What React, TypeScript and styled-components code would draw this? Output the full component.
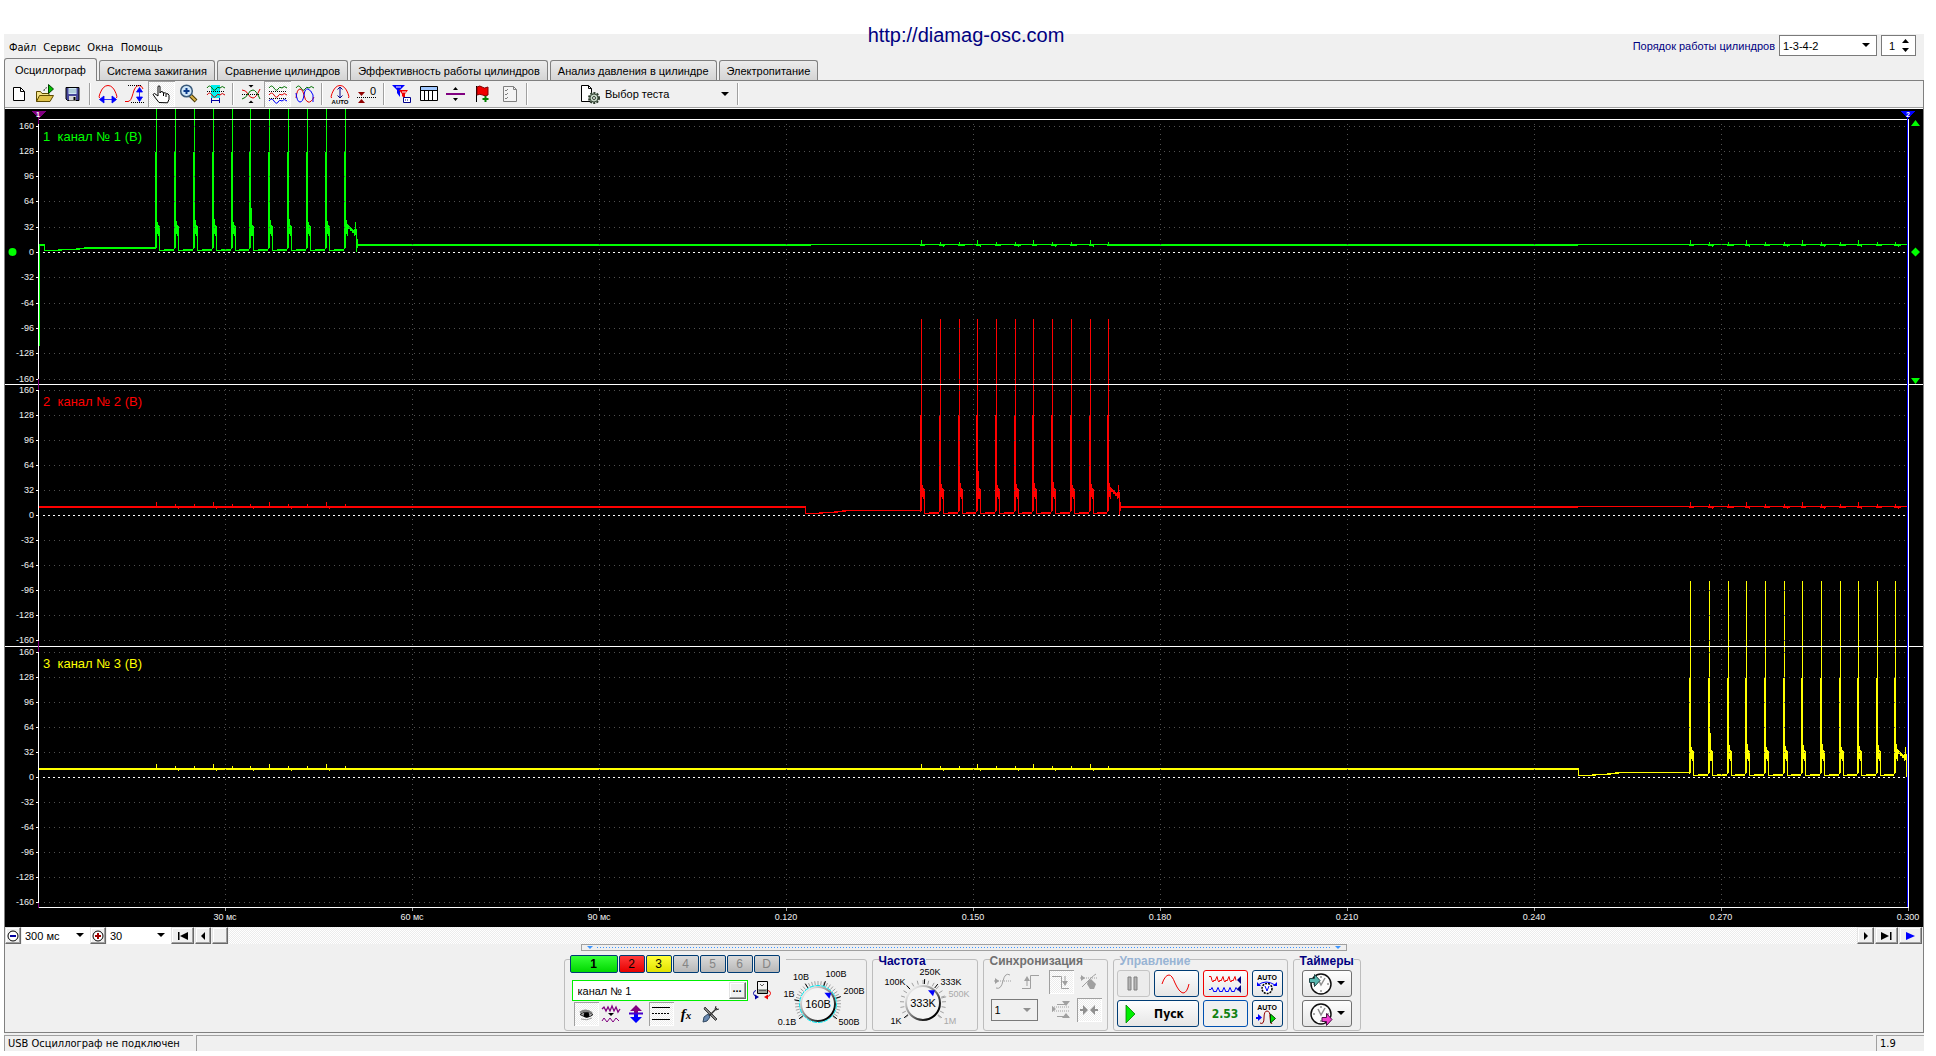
import React, { useLayoutEffect, useRef, useState } from "react";
import styled, { createGlobalStyle, css } from "styled-components";

const GlobalStyle = createGlobalStyle`
  *, *::before, *::after { box-sizing: border-box; }
  body { margin: 0; background: #fff; color: #000; font: 11px/14px "Liberation Sans", Arial, sans-serif; }
  button, select, input { font: inherit; color: inherit; margin: 0; padding: 0; border: 0; background: none; border-radius: 0; }
  fieldset { margin: 0; min-width: 0; }
  svg { display: block; flex: none; }
`;

const ui = `"DejaVu Sans Condensed", "DejaVu Sans", sans-serif`;
const checker = css`
  background: repeating-conic-gradient(#ececec 0 25%, #fff 0 50%) 0 0 / 2px 2px;
`;
const raised = css`
  background: #f0f0f0;
  border: 1px solid;
  border-color: #e3e3e3 #696969 #696969 #e3e3e3;
  box-shadow: inset -1px -1px #a0a0a0, inset 1px 1px #fff;
`;

/* ---------- window ---------- */

const Page = styled.div`position: relative; padding: 34px 12px 0 4px;`;
const SiteLink = styled.a`
  position: absolute; top: 23px; left: 0; right: 4px; margin: auto; width: max-content; z-index: 1;
  font-size: 20px; line-height: 24px; color: #000080; text-decoration: none;
`;
const Frame = styled.main`background: #f0f0f0;`;
const Header = styled.header`display: flex; justify-content: space-between; height: 46px;`;
const HeaderLeft = styled.div`display: flex; flex-direction: column; justify-content: space-between;`;
const MenuBar = styled.nav`display: flex; gap: 7px; padding: 7px 5px 0; font-family: ${ui};`;
const MenuItem = styled.button`line-height: 14px;`;
const TabList = styled.div`display: flex; align-items: flex-end; gap: 2px;`;
const Tab = styled.button<{ $active?: boolean }>`
  height: ${p => (p.$active ? 23 : 20)}px;
  margin-bottom: ${p => (p.$active ? -1 : 0)}px;
  padding: 0 ${p => (p.$active ? 10 : 7)}px;
  border: 1px solid #808080; border-bottom: 0; border-radius: 3px 3px 0 0;
  background: ${p => (p.$active ? "#f0f0f0" : "linear-gradient(#ececec, #d4d4d4)")};
  white-space: nowrap;
`;
const OrderBox = styled.div`display: flex; gap: 4px; padding: 1px 8px 0 0; height: 22px; align-items: stretch;`;
const OrderLabel = styled.label`color: #000080; align-self: center;`;
const Combo = styled.span<{ $w: number; $border?: boolean; $color?: string }>`
  display: grid; align-items: center; width: ${p => p.$w}px; background: ${p => p.$color ?? "#fff"};
  border: ${p => (p.$border ? "1px solid #7a7a7a" : "0")};
  > * { grid-area: 1 / 1; }
  > svg { justify-self: end; margin-right: 6px; pointer-events: none; }
`;
const ComboSelect = styled.select`appearance: none; width: 100%; height: 100%; padding-left: 3px; outline: 0;`;
const Spin = styled.span`
  display: grid; align-items: center; width: 35px; background: #fff; border: 1px solid #7a7a7a;
  > * { grid-area: 1 / 1; }
  > svg { justify-self: end; margin-right: 6px; }
`;
const SpinInput = styled.input`width: 100%; padding-left: 7px; outline: 0;`;

const Body = styled.section`border: 1px solid #808080;`;
const ToolBar = styled.div`
  display: flex; align-items: stretch; height: 28px; padding-bottom: 1px;
  border-bottom: 1px solid #fff; box-shadow: inset 0 -1px #a0a0a0;
`;
const Tool = styled.button<{ $on?: boolean }>`
  display: grid; place-items: center; width: 27px;
  ${p => p.$on && css`${checker} box-shadow: inset 1px 1px #a0a0a0, inset -1px -1px #fff;`}
`;
const Sep = styled.span`
  width: 8px; display: flex; justify-content: center; padding: 2px 0;
  &::before { content: ""; width: 2px; background: #a0a0a0; border-right: 1px solid #fff; }
`;
const TestButton = styled.button`
  display: flex; align-items: center; gap: 4px; width: 154px; margin-left: 49px; padding-right: 5px;
  > span { flex: 1; text-align: left; }
`;

/* ---------- scroll strip ---------- */

const ScrollStrip = styled.div`display: flex; height: 17px;`;
const Track = styled.div`flex: 1; ${checker}`;
const Raised = styled.button<{ $w: number }>`
  ${raised} width: ${p => p.$w}px; display: grid; place-items: center; margin-right: 1px;
`;

/* ---------- control deck ---------- */

const Deck = styled.div`display: flex; flex-direction: column; align-items: center; padding-bottom: 1px;`;
const Splitter = styled.div`
  width: 766px; height: 7px; border: 1px solid #a0a0a0; background: #f0f0f0;
  display: flex; align-items: center; gap: 4px; padding: 0 5px;
  &::before, &::after { content: ""; border: 3px solid transparent; border-top: 3px solid #3a94ff; border-bottom: 0; }
`;
const SplitDots = styled.span`
  flex: 1; height: 1px; background: repeating-linear-gradient(90deg, #3a94ff 0 1px, transparent 1px 3px);
`;
const Groups = styled.div`display: flex; align-items: flex-end; gap: 5px; padding-right: 4px;`;
const groupBox = css`border: 1px solid #bdbdbd; border-radius: 3px;`;
const ChannelGroup = styled.div`${groupBox} display: flex; width: 303px; height: 72px; margin-top: 8px;`;
const ChannelLeft = styled.div`display: flex; flex-direction: column; width: 207px; padding-left: 5px; margin-top: -5px;`;
const ChannelTabs = styled.div`display: flex; gap: 1px; background: #f0f0f0; width: 216px; padding-right: 5px;`;
const fills: Record<string, string> = {
  green: "linear-gradient(#37ff37, #00d800)",
  red: "linear-gradient(#ff3a3a, #e60000)",
  yellow: "linear-gradient(#ffff3a, #e2e200)",
  gray: "linear-gradient(#dadada, #b8b8b8)",
};
const ChannelTab = styled.button<{ $fill: string; $wide?: boolean }>`
  width: ${p => (p.$wide ? 48 : 26)}px; height: 18px; border: 1px solid #003c74; border-radius: 2px;
  background: ${p => fills[p.$fill]};
  font-size: 12px; font-weight: ${p => (p.$wide ? 700 : 400)};
  color: ${p => (p.$fill === "gray" ? "#858585" : "#000")};
`;
const NameRow = styled.div`display: flex; align-items: center; gap: 4px; padding: 7px 0 0 2px;`;
const NameField = styled.span`
  display: flex; align-items: center; width: 177px; height: 21px; background: #fff; border: 1px solid #00f000; padding: 1px;
`;
const NameInput = styled.input`flex: 1; min-width: 0; padding-left: 4px; outline: 0;`;
const MoreButton = styled.button`
  ${raised} width: 17px; height: 17px; padding-bottom: 6px; line-height: 8px; font-weight: 700;
`;
const ModeRow = styled.div`display: flex; padding: 1px 0 0 4px;`;
const Mode = styled.button<{ $on?: boolean }>`
  display: grid; place-items: center; width: 25px; height: 24px;
  ${p => p.$on && css`${checker} box-shadow: inset 1px 1px #a0a0a0, inset -1px -1px #fff;`}
`;
const FxMark = styled.span`font: italic 700 15px/18px "Liberation Serif", serif; > small { font-size: 11px; }`;
const Group = styled.fieldset<{ $w: number }>`
  ${groupBox} width: ${p => p.$w}px; height: 80px; padding: 3px 3px 0;
`;
const Legend = styled.legend<{ $color: string }>`
  margin-left: 3px; padding: 4px 0 0; font-size: 12px; line-height: 12px; font-weight: 700; color: ${p => p.$color};
`;
const DialBox = styled.label`position: relative; display: block; > svg { overflow: visible; }`;
const DialInput = styled.input`position: absolute; inset: 0; width: 100%; height: 100%; opacity: 0; cursor: pointer;`;
const DialSlot = styled.div`padding: 5px 0 0;`;
const FreqSlot = styled.div`margin-top: -6px;`;
const SyncGrid = styled.div`display: grid; grid-template-columns: 29px 29px 28px 25px; row-gap: 4px; padding-left: 4px;`;
const SyncCombo = styled.div`grid-column: span 2; display: flex; align-items: center; > span { height: 22px; }`;
const RunGrid = styled.div`display: grid; grid-template-columns: 33px 45px 45px 31px; gap: 3px 4px; grid-auto-rows: 27px;`;
const Push = styled.button<{ $edge?: string; $span?: boolean }>`
  display: flex; align-items: center; justify-content: center; gap: 4px; min-width: 0;
  padding: 0 ${p => (p.$span ? 6 : 0)}px;
  grid-column: ${p => (p.$span ? "span 2" : "auto")};
  border: 1px solid ${p => p.$edge ?? "#003c74"}; border-radius: 3px;
  background: linear-gradient(#fdfdfd, #e6e6e6);
  font: 700 12px/14px "DejaVu Sans Condensed", sans-serif;
  &:disabled { background: #ececec; }
`;
const StartLabel = styled.span`flex: 1; padding-left: 6px; text-align: center;`;
const Reading = styled.output`
  display: grid; place-items: center; border: 1px solid #0050b0; border-radius: 3px; color: #108010;
  font: 700 12px/14px "DejaVu Sans Condensed", sans-serif;
`;
const TimerColumn = styled.div`
  display: grid; grid-auto-rows: 27px; row-gap: 3px; padding: 0 5px;
`;

const StatusBar = styled.footer`display: flex; gap: 3px; padding-top: 2px; font-family: ${ui};`;
const StatusCell = styled.span<{ $w?: number }>`
  ${p => (p.$w ? `width: ${p.$w}px;` : "flex: 1;")}
  height: 16px; padding: 1px 3px; line-height: 14px; border-top: 1px solid #a0a0a0; border-left: 1px solid #a0a0a0;
`;

/* ---------- icons ---------- */

const Svg = ({ w = 20, h = 20, children }: { w?: number; h?: number; children: React.ReactNode }) => (
  <svg width={w} height={h} viewBox={`0 0 ${w} ${h}`} fill="none" aria-hidden="true">{children}</svg>
);
const Down = ({ c = "#000" }: { c?: string }) => <Svg w={8} h={5}><path d="M0 0h8L4 4z" fill={c} /></Svg>;
const UpDown = () => <Svg w={7} h={14}><path d="M0 4h7L3.500 0zM0 9h7L3.500 13z" fill="#000" /></Svg>;
const wave = (y: number) => `M1 ${y}q2.500-4 5 0t4 1t4-1q2-3 5 0`;

const icons = {
  fresh: <Svg><path d="M4.500 3.500h7l4 4v9h-11z" fill="#fff" stroke="#000" /><path d="M11.500 3.500v4h4" stroke="#000" /></Svg>,
  open: <Svg>
    <path d="M.5 17.500v-10h4l1.500 2h7v3" fill="#f5e48a" stroke="#5c4a00" />
    <path d="M.5 17.500l3-6h14l-3.500 6z" fill="#dfc24a" stroke="#5c4a00" />
    <path d="M8 7q0-3.500 5-3.500" stroke="#444" strokeDasharray="2 1" />
    <path d="M12.500.5v9l5-4.500z" fill="#00c000" stroke="#004000" />
  </Svg>,
  save: <Svg>
    <path d="M3 3.500h13v13H4.500L3 15z" fill="#46469a" stroke="#000" />
    <path d="M5.500 4h8v6h-8z" fill="#cfe8f4" /><path d="M6 6h7M6 8h7" stroke="#8fb0c0" />
    <path d="M6 12h7v4.500H6z" fill="#d8d8d8" /><path d="M10.500 13h2v3h-2z" fill="#000" />
  </Svg>,
  period: <Svg>
    <path d="M1.500 14q-1-1 .5-4.500Q5 1.500 10 1.500t8 8q1.500 3.500.5 4.500" stroke="#f00000" />
    <path d="M5 15.500h10M1.500 15.500l4.500-3.500v7zM18.500 15.500L14 12v7z" fill="#00f" stroke="#00f" strokeWidth=".8" />
  </Svg>,
  ampl: <Svg>
    <path d="M0 17.500h3q3 0 5-8t6-8q3 0 4 3.500" stroke="#f00000" />
    <path d="M3 1.500h14M6 18.500h13" stroke="#000" strokeDasharray="1 1" />
    <path d="M14.500 6v9M14.500 3.500L11.500 8h6zM14.500 17.500l-3-4.500h6z" fill="#00f" stroke="#00f" strokeWidth=".8" />
  </Svg>,
  hand: <Svg>
    <path d="M7 18.500L3.500 14 1 10.500l1.500-1L6 12V3q0-1.200 1-1.200T8 3v6l1-1.500 2 .5.500 1 2-.2.700 1 1.800 0 1 1.500v4l-1.500 3.500z" fill="#fff" stroke="#000" />
    <path d="M11.500 9v3M14 10v3" stroke="#000" />
  </Svg>,
  zoom: <Svg>
    <path d="M11 11l6 6" stroke="#4a3a00" strokeWidth="4" /><path d="M11.500 11.500l5 5" stroke="#d8b048" strokeWidth="2" />
    <circle cx="7.500" cy="7" r="5.800" fill="#cfe6f8" stroke="#3a5a7a" strokeWidth="1.500" />
    <path d="M7.500 4v6M4.500 7h6" stroke="#0a3a8a" strokeWidth="2" />
  </Svg>,
  range: <Svg>
    <path d="M5 1h9v13H5z" fill="#00f0f0" /><path d={wave(4)} stroke="#007000" /><path d={wave(11)} stroke="#d00000" />
    <path d="M1 7.500h18" stroke="#000" strokeDasharray="1 1" />
    <path d="M5.500 14v5M13.500 14v5M6 16.500h7" stroke="#0000a0" />
  </Svg>,
  center: <Svg>
    <path d="M1 6q4 0 6 4t5 4 7-9" stroke="#e00000" /><path d="M1 15q4-1 6-5t5-4 7 9" stroke="#007000" />
    <path d="M1 10.500h18" stroke="#000" strokeDasharray="1 1" />
    <path d="M7.500 1h5L10 3.500zM7.500 19h5L10 16.500z" fill="#000" />
  </Svg>,
  stack: <Svg>
    <path d={wave(4)} stroke="#007000" /><path d={wave(11)} stroke="#e00000" /><path d={wave(17)} stroke="#00f" />
    <path d="M1 7.500h18M1 14.500h18" stroke="#000" strokeDasharray="1 1" />
  </Svg>,
  merge: <Svg>
    <path d={wave(4)} stroke="#007000" />
    <path d="M1 14q1-9 4-9t4 6 4 7 6-5" stroke="#e00000" /><path d="M1 9q1 9 4 9t4-7 4-6 5 6v7" stroke="#00f" />
  </Svg>,
  auto: <Svg>
    <path d="M1.500 14q-1-1 .5-4.500Q5 1.500 10 1.500t8 8q1.500 3.500.5 4.500" stroke="#f00000" />
    <path d="M10 4v9M7.500 5.500L10 3l2.500 2.500M7.500 11.500L10 14l2.500-2.500" stroke="#00008b" />
    <text x="10" y="20" textAnchor="middle" fontSize="6" fontWeight="700" fontFamily="Liberation Sans" fill="#000">AUTO</text>
  </Svg>,
  zero: <Svg>
    <path d="M1 8h7L4.500 12zM1 19h7l-3.500-4z" fill="#900000" /><path d="M0 13.500h19" stroke="#000" strokeDasharray="1 1" />
    <text x="13" y="11" fontSize="11" fontFamily="Liberation Sans" fill="#000">0</text>
  </Svg>,
  filter: <Svg>
    <path d="M0 1h13L8 6v7L5 9V6z" fill="#00f" /><path d="M7 6h9l-3 4v5l-3-3v-2z" fill="#f00000" />
    <path d="M4 3h5M10 8h4" stroke="#fff" /><path d="M11.500 13.500h7v5h-7z" fill="#fff" stroke="#00008b" /><path d="M13 16h4" stroke="#00008b" strokeDasharray="1 1" />
  </Svg>,
  table: <Svg><path d="M1.500 2.500h17v14h-17z" fill="#fff" stroke="#000" /><path d="M2 3h16v3H2z" fill="#a0c8ff" /><path d="M2 6.500h16M5.500 6v10M9.500 6v10M13.500 6v10" stroke="#000" /></Svg>,
  split: <Svg><path d="M0 10h19" stroke="#800080" strokeWidth="2" /><path d="M7 6h5L9.500 3zM7 14h5l-2.500 3z" fill="#000" /></Svg>,
  flag: <Svg><path d="M3.500 2v16" stroke="#000" /><path d="M4 3q3-2 5 0t6 0v8q-3 1.500-5.500 0T4 11z" fill="#f00000" stroke="#800000" /><path d="M12.500 12v6M9.500 15h6" stroke="#008000" strokeWidth="2" /></Svg>,
  list: <Svg><path d="M3.500 2.500h10l3 3v12h-13z" fill="#f4f4f4" stroke="#808080" /><path d="M13.500 2.500v3h3M5 6l1 1 2-2M5 10l1 1 2-2M5 14l1 1 2-2" stroke="#808080" /></Svg>,
  test: <Svg w={21}>
    <path d="M1.500 1.500h7l3 3v13h-10z" fill="#fff" stroke="#000" /><path d="M8.500 1.500v3h3" stroke="#000" />
    <circle cx="14" cy="14" r="5" fill="#b8c8b8" stroke="#2c3c2c" strokeWidth="2" strokeDasharray="2 1.200" />
    <circle cx="14" cy="14" r="4" fill="#c8d8c8" stroke="#405040" /><circle cx="14" cy="14" r="1.500" fill="#fff" stroke="#304030" />
  </Svg>,
  minus: <Svg w={12} h={12}><circle cx="6" cy="6" r="5" fill="#fff" stroke="#000" /><path d="M3 6h6" stroke="#0000a0" strokeWidth="2" /></Svg>,
  plus: <Svg w={12} h={12}><circle cx="6" cy="6" r="5" fill="#fff" stroke="#000" /><path d="M3 6h6M6 3v6" stroke="#a00000" strokeWidth="2" /></Svg>,
  first: <Svg w={12} h={8}><path d="M1 0h1.500v8H1zM11 0v8L3 4z" fill="#000" /></Svg>,
  prev: <Svg w={5} h={8}><path d="M4 0v8L0 4z" fill="#000" /></Svg>,
  next: <Svg w={5} h={8}><path d="M1 0v8l4-4z" fill="#000" /></Svg>,
  last: <Svg w={12} h={8}><path d="M9 0h1.500v8H9zM0 0v8l8-4z" fill="#000" /></Svg>,
  play: <Svg w={9} h={8}><path d="M0 0v8l9-4z" fill="#00f" /></Svg>,
  device: <Svg h={19}>
    <path d="M5.500.5h10v12h-10z" fill="#f4f4f4" stroke="#000" /><path d="M6 8h9v4H6z" fill="#a0a8a0" /><path d="M8 3l2 2 2-2M7 9.500h7" stroke="#606060" />
    <path d="M4 9.500q-2.500.5-2.500 3t4 3.500" stroke="#0000a0" /><path d="M3 13.500v5l4-2.500z" fill="#0000a0" />
    <path d="M16 9.500q2.500.5 2.500 3t-4 3.500" stroke="#f00000" /><path d="M16 13.500v5l-4-2.500z" fill="#f00000" />
  </Svg>,
  eye: <Svg><path d="M4 10.500q6-5 13 0-5 5-13 0z" fill="#b0b0b0" stroke="#202020" /><path d="M4 8.500q6-4 12 .5" stroke="#808080" strokeWidth="2" /><circle cx="10.500" cy="11" r="2.800" fill="#000" /><path d="M5 15q6 2 11-1" stroke="#a0a0a0" /></Svg>,
  smooth: <Svg><path d="M1 5l2-2 2 4 2-4 2 4 2-5 2 5 2-4 2 5 2-3" stroke="#800080" strokeWidth="1.300" /><path d="M7 9h6l-3 3z" fill="#000" /><path d="M1 17l2-3 3 4 3-4 3 4 3-4 3 3" stroke="#800080" /></Svg>,
  shift: <Svg><path d="M10 1l6 6h-4v3H8V7H4z" fill="#800080" /><path d="M10 19l6-6h-4v-3H8v3H4z" fill="#00f" /><path d="M3 9.500h14" stroke="#40c" strokeWidth="2" /></Svg>,
  lines: <Svg><path d="M1 3.500h18M1 15.500h18" stroke="#000" /><path d="M1 9.500h18" stroke="#000" strokeDasharray="2 1" /></Svg>,
  tools: <Svg><path d="M4 3l12 12-1.500 1.500L3 5z" fill="#808080" stroke="#202020" strokeWidth=".8" /><path d="M16 4l-8 8" stroke="#303030" strokeWidth="1.500" /><path d="M3 13l4-3 2 3-3 4-4 1z" fill="#6888b0" stroke="#304860" /><path d="M14 5l1-3M15 6l3-1" stroke="#303030" /></Svg>,
  rise: <Svg><path d="M1 9h17" stroke="#a0a0a0" strokeDasharray="1 1" /><path d="M2 6v6l4-3z" fill="#a0a0a0" /><path d="M3 16q5 2 7-7t7-6" stroke="#a0a0a0" /></Svg>,
  edgeUp: <Svg><path d="M0 16.500h8.500v-13H17" stroke="#a0a0a0" /><path d="M5 14V7" stroke="#a0a0a0" /><path d="M2 9l3-5 3 5z" fill="#a0a0a0" /></Svg>,
  edgeDown: <Svg><path d="M1 4.500h9.500v12H18" stroke="#a0a0a0" /><path d="M14 4v8" stroke="#a0a0a0" /><path d="M11 9h6l-3 5z" fill="#a0a0a0" /></Svg>,
  manual: <Svg><path d="M1 6h17" stroke="#a0a0a0" strokeDasharray="1 1" /><path d="M2 3v6l4-3zM9 9l3-2 5 5-2 5h-4l-3-5z" fill="#a0a0a0" /><path d="M3 15q4-4 8-8t6-5" stroke="#a0a0a0" /></Svg>,
  levels: <Svg><path d="M1 7h17M1 11h17" stroke="#a0a0a0" strokeDasharray="1 1" /><path d="M1 6v6l4-3zM11 1h8l-4 5zM11 18h8l-4-5z" fill="#a0a0a0" /><path d="M6 16.500h12M6 4.500h8" stroke="#a0a0a0" /></Svg>,
  meet: <Svg><path d="M1 10h5M14 10h5" stroke="#909090" strokeWidth="2" /><path d="M4 5l5 5-5 5zM16 5l-5 5 5 5z" fill="#909090" /></Svg>,
  pause: <Svg w={14} h={16}><path d="M2 1h3v13H2zM8 1h3v13H8z" fill="#b4b4b4" stroke="#808080" /></Svg>,
  sine: <Svg w={30}><path d="M1 10Q4 1 8 1q3 0 6 8 4 9 8 10 4 0 6-9" stroke="#f00000" /></Svg>,
  pair: <Svg w={33}>
    <path d="M0 2.500h2l1 4 1 1.500 1-2 1 1 2-4.500l1 4 1 1.500 1-2 1 1 2-4.500l1 4 1 1.500 1-2 1 1 2-4.500l1 4 1 1.500 1-2 1 1 2-4.500l1 4" stroke="#f00000" />
    <path d="M0 15.500h2l1-2 2 4.500 1-1 1 1 2-4.500 2 4.500 1-1 1 1 2-4.500 2 4.500 1-1 1 1 2-4.500 2 4.500 1-1 1 1 2-4.500 2 3" stroke="#00f" />
    <path d="M32 2v8l-4-4zM32 11v8l-4-4z" fill="#000080" />
  </Svg>,
  autoKnob: <Svg w={22} h={22}>
    <text x="11" y="7" textAnchor="middle" fontSize="7" fontWeight="700" fontFamily="Liberation Sans" fill="#000">AUTO</text>
    <path d="M2 12q8-6 17 0" stroke="#00f" /><path d="M1 9v4h4zM21 9v4h-4z" fill="#00f" />
    <circle cx="11" cy="15.500" r="5" fill="#fff" stroke="#000" strokeWidth="1.500" strokeDasharray="2 1" /><path d="M9 13l2 5 2-5" stroke="#00f" />
  </Svg>,
  autoRun: <Svg w={22} h={22}>
    <text x="11" y="7" textAnchor="middle" fontSize="7" fontWeight="700" fontFamily="Liberation Sans" fill="#000">AUTO</text>
    <path d="M4 20q4 2 4-5t3-7 3 6 2 7" stroke="#900000" /><path d="M0 15h4" stroke="#00f" strokeWidth="2" /><path d="M2 11v7l4-3.500z" fill="#00f" /><path d="M14.500 11v9l5-4.500z" fill="#00e000" stroke="#004000" />
  </Svg>,
  start: <Svg w={13} h={20}><path d="M2 1v18l9-9z" fill="#00f000" stroke="#008000" strokeWidth=".8" /></Svg>,
};

const Clock = ({ arrow }: { arrow: "in" | "out" }) => (
  <Svg w={24} h={24}>
    <circle cx="12" cy="12" r="10" fill="#fdfdfd" stroke="#101010" strokeWidth="1.500" />
    <path d="M12 4v2M12 18v2M4 12h2M18 12h2M9 7l3 6 4-7" stroke="#909090" strokeWidth="1.500" />
    {arrow === "in"
      ? <path d="M.5 6.500h5v-4l5.500 6-5.500 6v-4h-5z" fill="#58b8b0" stroke="#204848" />
      : <path d="M13 15.500h4.500v-4l5.500 6-5.500 6v-4H13z" fill="#f040d0" stroke="#501048" />}
  </Svg>
);

/* ---------- dials ---------- */

type Mark = { a: number; text: string; x: number; y: number; off?: boolean };
type DialProps = { w: number; cx: number; cy: number; value: string; ring?: string; marks: Mark[]; name: string; ticks: number; pointer: number };

const Dial = ({ w, cx, cy, value, ring, marks, name, ticks, pointer }: DialProps) => {
  const ray = (a: number, r: number): [number, number] => {
    const t = (a * Math.PI) / 180;
    return [cx + r * Math.sin(t), cy - r * Math.cos(t)];
  };
  const seg = (a: number, r1: number, r2: number) => `M${ray(a, r1).join(" ")}L${ray(a, r2).join(" ")}`;
  const id = `rim-${ticks}`;
  const [px, py] = ray(pointer, 14);
  return (
    <DialBox>
      <svg width={w} height={64} viewBox={`0 0 ${w} 64`} fill="none">
        <defs>
          <linearGradient id={id} x1="0" y1="0" x2="1" y2="1">
            <stop offset=".1" stopColor="#f4f4f4" /><stop offset=".5" stopColor="#808080" /><stop offset=".85" stopColor="#000" />
          </linearGradient>
        </defs>
        {Array.from({ length: ticks }, (_, i) => (
          <path key={i} d={seg(-130 + (260 / (ticks - 1)) * i, 19, 23)} stroke="#a0a0a0" />
        ))}
        {marks.map(m => <path key={m.text} d={seg(m.a, 19, 24)} stroke={m.off ? "#a0a0a0" : "#000"} />)}
        <circle cx={cx} cy={cy} r="17" fill="#f4f4f4" stroke={`url(#${id})`} strokeWidth="2" />
        {ring && <circle cx={cx} cy={cy} r="18.500" stroke={ring} strokeDasharray="5 1" />}
        <path d="M-4-2h7l-2 6z" fill="#00f" transform={`translate(${px} ${py})`} />
        <g fontFamily="Liberation Sans, Arial, sans-serif" textAnchor="middle">
          <text x={cx} y={cy + 4} fontSize="11" fill="#000">{value}</text>
          {marks.map(m => <text key={m.text} x={m.x} y={m.y} fontSize="9" fill={m.off ? "#a8a8a8" : "#000"}>{m.text}</text>)}
        </g>
      </svg>
      <DialInput type="range" aria-label={name} />
    </DialBox>
  );
};

/* ---------- oscillogram ---------- */

const H = 818;
const AXIS = 33;
const series = (start: number, step: number, n: number) => Array.from({ length: n }, (_, k) => start + step * k);
const bursts = [series(18.93, 3.03, 11), series(141.7, 3, 11), series(265.1, 2.99, 12)];
const channels = [
  { n: 1, color: "#00ff00", zero: 143, step: 25.3, level: 8, peak: 0, shoulder: 43, from: 0.9, label: 32 },
  { n: 2, color: "#ff0000", zero: 406, step: 25, level: 9, peak: 210, shoulder: 306, from: 123, label: 297 },
  { n: 3, color: "#ffff00", zero: 668, step: 25, level: 9, peak: 472, shoulder: 569, from: 247, label: 559 },
];
const timeLabels = ["30 мс", "60 мс", "90 мс", "0.120", "0.150", "0.180", "0.210", "0.240", "0.270", "0.300"];

function tracePath(index: number, X: (t: number) => number, right: number) {
  const c = channels[index];
  const z = c.zero;
  const first = index === 0;
  const hits = bursts[index].map(X);
  const d: string[] = [];
  const h = (x1: number, x2: number, y: number, t = 1) => x2 > x1 && d.push(`M${x1} ${y}h${x2 - x1}v${t}h${x1 - x2}z`);
  const v = (x: number, y1: number, y2: number) => d.push(`M${x} ${y1}h1v${y2 - y1}h-1z`);
  const drop = X(c.from);

  h(AXIS + 1, drop, z - c.level, 2);
  v(drop, z - c.level, z - 1);
  const ramp = X(c.from + (first ? 6.5 : 6));
  const mid = X(c.from + 3);
  h(drop, mid, z - 2);
  h(mid - 4, ramp - 4, z - 3);
  h(ramp - 8, ramp + 4, z - 4);
  h(ramp, hits[0], z - 5, first ? 2 : 1);
  if (first) v(AXIS + 1, z - c.level, z + 94);

  hits.forEach((x, k) => {
    v(x, c.peak, z - 4);
    v(x - 1, c.shoulder, z - 3);
    if ((k * 7 + index * 3) % 11 === 2) v(x + 1, z - 44, z - 16);
    v(x + 1, z - 30 - ((k * 5) % 4), z - 18);
    v(x + 2, z - 27, z - 16);
    if (k < hits.length - 1) {
      v(x + 3, z - 26, z - 1);
      const half = Math.round((x + hits[k + 1]) / 2);
      h(x + 3, half, z - 2);
      h(half - 2, hits[k + 1] - 1, z - 3, 2);
    }
  });
  const end = hits[hits.length - 1];
  for (let i = 0; i < 9; i++) v(end + 2 + i, z - 28 + i, z - 25 + i + (i % 2));
  v(end + 9, z - 23, z - 16);
  v(end + 10, z - 30, z - 17);
  v(end + 11, z - 23, z);
  if (end + 14 < right) {
    v(end + 12, z - 13, z - 4);
    h(end + 13, right, z - c.level);
    h(end + 13, X(first ? 124 : 247), z - c.level, 2);
    if (first) h(X(172), X(247), z - c.level, 2);
  }

  bursts.forEach((group, g) => {
    if (g === index) return;
    group.map(X).forEach((x, k) => {
      v(x, z - c.level - (k % 3 === 0 ? 4 : 2), z - c.level + 1);
      h(x - 1, x + 4 + (k % 3), z - c.level, 2);
      if (k % 2) v(x + 3, z - c.level, z - c.level + 3);
    });
  });
  return d.join("");
}

const PlotBox = styled.div`background: #000; height: ${H}px; overflow: hidden;`;

const Plot = () => {
  const ref = useRef<HTMLDivElement>(null);
  const [w, setW] = useState(1918);
  useLayoutEffect(() => {
    const box = ref.current!;
    const fit = () => setW(box.clientWidth);
    fit();
    const ro = new ResizeObserver(fit);
    ro.observe(box);
    return () => ro.disconnect();
  }, []);
  const right = w - 15;
  const X = (t: number) => Math.round(AXIS + (t / 300) * (right - AXIS));
  return (
    <PlotBox ref={ref}>
      <svg width={w} height={H} shapeRendering="crispEdges" fontFamily="Liberation Sans, Arial, sans-serif" role="img" aria-label="Осциллограмма">
        {channels.map((c, i) => <path key={c.n} d={tracePath(i, X, right - 1)} fill={c.color} />)}
        {timeLabels.map((_, i) => i < 9 && (
          <line key={i} x1={X(30 * (i + 1)) + 0.5} x2={X(30 * (i + 1)) + 0.5} y1={15} y2={794} stroke="#505050" strokeDasharray="1 4" />
        ))}
        {channels.map(c => Array.from({ length: 11 }, (_, k) => {
          const y = Math.round(c.zero + (k - 5) * c.step);
          const value = 160 - 32 * k;
          return (
            <g key={`${c.n}-${k}`}>
              {k === 5
                ? <line x1={38} x2={right} y1={y + 0.5} y2={y + 0.5} stroke="#fff" strokeDasharray="2 3" />
                : <line x1={39} x2={right} y1={y + 0.5} y2={y + 0.5} stroke="#505050" strokeDasharray="1 4" />}
              <line x1={AXIS - 2} x2={AXIS} y1={y + 0.5} y2={y + 0.5} stroke="#fff" />
              <text x={AXIS - 4} y={y + 3} textAnchor="end" fontSize="9" fill="#f0f0f0">{value}</text>
            </g>
          );
        }))}
        <path d={`M${AXIS} 10.500H${right}M0 275.500H${w}M0 537.500H${w}M${AXIS} 798.500H${right}M${AXIS + 0.5} 10V799M${right + 0.5} 10V799`} stroke="#fff" />
        <path d={`M${right - 0.5} 9V798`} stroke="#0000ff" />
        <path d={`M${AXIS + 0.5} 9V15M${AXIS + 0.5} 270V281M${AXIS + 0.5} 532V543M${AXIS + 0.5} 794V799`} stroke="#800080" />
        {timeLabels.map((t, i) => (
          <g key={t}>
            <line x1={X(30 * (i + 1)) + 0.5} x2={X(30 * (i + 1)) + 0.5} y1={799} y2={802} stroke="#a0a0a0" />
            <text x={X(30 * (i + 1))} y={811} textAnchor="middle" fontSize="9" fill="#f0f0f0">{t}</text>
          </g>
        ))}
        {channels.map(c => (
          <text key={c.n} x={AXIS + 5} y={c.label} fontSize="13" fill={c.color} xmlSpace="preserve">{`${c.n}  канал № ${c.n} (В)`}</text>
        ))}
        <path d={`M${AXIS - 7} 2h15l-7 7h-1z`} fill="#800080" />
        <path d={`M${right - 8} 2h15l-7 7h-1z`} fill="#0000ff" />
        <g fill="#fff" fontSize="7" fontWeight="700" textAnchor="middle">
          <text x={AXIS} y={8}>1</text><text x={right} y={8}>2</text>
        </g>
        <g fill="#00ff00" shapeRendering="auto">
          <circle cx={7.5} cy={143} r={4} />
          <path d={`M${w - 12} 17h9l-4.500-6zM${w - 12} 143l4.500-4.500 4.500 4.500-4.500 4.500zM${w - 12} 269h9l-4.500 6z`} />
        </g>
      </svg>
    </PlotBox>
  );
};

/* ---------- app ---------- */

type Named = [keyof typeof icons, string, boolean?];
const toolGroups: Named[][] = [
  [["fresh", "Создать"], ["open", "Открыть"], ["save", "Сохранить"]],
  [["period", "Период"], ["ampl", "Амплитуда"], ["hand", "Рука", true], ["zoom", "Масштаб"], ["range", "Диапазон"]],
  [["center", "Центр"], ["stack", "Раздельно", true], ["merge", "Совместно"]],
  [["auto", "Авто"], ["zero", "Ноль"]],
  [["filter", "Фильтр"], ["table", "Таблица"], ["split", "Разделить"], ["flag", "Метка"], ["list", "Список"]],
];
const tabs = ["Осциллограф", "Система зажигания", "Сравнение цилиндров", "Эффективность работы цилиндров", "Анализ давления в цилиндре", "Электропитание"];
const channelTabs: [string, string][] = [["1", "green"], ["2", "red"], ["3", "yellow"], ["4", "gray"], ["5", "gray"], ["6", "gray"], ["D", "gray"]];

export default function App() {
  return (
    <Page>
      <GlobalStyle />
      <SiteLink href="http://diamag-osc.com">http://diamag-osc.com</SiteLink>
      <Frame>
        <Header>
          <HeaderLeft>
            <MenuBar>{["Файл", "Сервис", "Окна", "Помощь"].map(m => <MenuItem key={m}>{m}</MenuItem>)}</MenuBar>
            <TabList role="tablist">
              {tabs.map((t, i) => <Tab key={t} role="tab" aria-selected={i === 0} $active={i === 0}>{t}</Tab>)}
            </TabList>
          </HeaderLeft>
          <OrderBox>
            <OrderLabel htmlFor="order">Порядок работы цилиндров</OrderLabel>
            <Combo $w={98} $border><ComboSelect id="order"><option>1-3-4-2</option></ComboSelect><Down /></Combo>
            <Spin><SpinInput aria-label="Номер цилиндра" defaultValue="1" /><UpDown /></Spin>
          </OrderBox>
        </Header>

        <Body>
          <ToolBar>
            {toolGroups.map((g, i) => (
              <React.Fragment key={i}>
                {g.map(([k, label, on]) => <Tool key={k} aria-label={label} $on={on}>{icons[k]}</Tool>)}
                <Sep />
              </React.Fragment>
            ))}
            <TestButton>{icons.test}<span>Выбор теста</span><Down /></TestButton>
            <Sep />
          </ToolBar>

          <Plot />

          <ScrollStrip>
            <Raised $w={16} aria-label="Уменьшить">{icons.minus}</Raised>
            <Combo $w={68}><ComboSelect aria-label="Развёртка"><option>300 мс</option></ComboSelect><Down /></Combo>
            <Raised $w={16} aria-label="Увеличить">{icons.plus}</Raised>
            <Combo $w={64}><ComboSelect aria-label="Масштаб"><option>30</option></ComboSelect><Down /></Combo>
            <Raised $w={23} aria-label="В начало">{icons.first}</Raised>
            <Raised $w={16} aria-label="Назад">{icons.prev}</Raised>
            <Raised $w={16} aria-label="Ползунок" />
            <Track />
            <Raised $w={17} aria-label="Вперёд">{icons.next}</Raised>
            <Raised $w={23} aria-label="В конец">{icons.last}</Raised>
            <Raised $w={23} aria-label="Воспроизвести">{icons.play}</Raised>
          </ScrollStrip>

          <Deck>
            <Splitter><SplitDots /></Splitter>
            <Groups>
              <ChannelGroup role="group" aria-label="Каналы">
                <ChannelLeft>
                  <ChannelTabs>
                    {channelTabs.map(([t, f], i) => <ChannelTab key={t} $fill={f} $wide={i === 0}>{t}</ChannelTab>)}
                  </ChannelTabs>
                  <NameRow>
                    <NameField>
                      <NameInput aria-label="Имя канала" defaultValue="канал № 1" />
                      <MoreButton aria-label="Выбрать">...</MoreButton>
                    </NameField>
                    {icons.device}
                  </NameRow>
                  <ModeRow>
                    <Mode $on aria-label="Показать">{icons.eye}</Mode>
                    <Mode aria-label="Сглаживание">{icons.smooth}</Mode>
                    <Mode aria-label="Смещение">{icons.shift}</Mode>
                    <Mode $on aria-label="Линии">{icons.lines}</Mode>
                    <Mode aria-label="Функция"><FxMark>f<small>x</small></FxMark></Mode>
                    <Mode aria-label="Настройка">{icons.tools}</Mode>
                  </ModeRow>
                </ChannelLeft>
                <DialSlot>
                  <Dial name="Предел" w={90} cx={46} cy={39} value="160В" ring="#00e8f0" ticks={33} pointer={48}
                    marks={[
                      { a: -128, text: "0.1В", x: 15, y: 60 }, { a: -80, text: "1В", x: 17, y: 32 }, { a: -32, text: "10В", x: 29, y: 15 },
                      { a: 18, text: "100В", x: 64, y: 12 }, { a: 72, text: "200В", x: 82, y: 29 }, { a: 128, text: "500В", x: 77, y: 60 },
                    ]} />
                </DialSlot>
              </ChannelGroup>

              <Group $w={106}>
                <Legend $color="#000080">Частота</Legend>
                <FreqSlot>
                  <Dial name="Частота" w={98} cx={47} cy={39} value="333K" ticks={19} pointer={40}
                    marks={[
                      { a: -128, text: "1K", x: 20, y: 60 }, { a: -43, text: "100K", x: 19, y: 21 }, { a: 4, text: "250K", x: 54, y: 11 },
                      { a: 38, text: "333K", x: 75, y: 21 }, { a: 75, text: "500K", x: 83, y: 33, off: true }, { a: 128, text: "1M", x: 74, y: 60, off: true },
                    ]} />
                </FreqSlot>
              </Group>

              <Group $w={125}>
                <Legend $color="#707070">Синхронизация</Legend>
                <SyncGrid>
                  <Mode aria-label="Уровень">{icons.rise}</Mode>
                  <Mode aria-label="Фронт">{icons.edgeUp}</Mode>
                  <Mode $on aria-label="Спад">{icons.edgeDown}</Mode>
                  <Mode aria-label="Ручная">{icons.manual}</Mode>
                  <SyncCombo>
                    <Combo $w={47} $border $color="#f0f0f0"><ComboSelect aria-label="Канал синхронизации"><option>1</option></ComboSelect><Down c="#909090" /></Combo>
                  </SyncCombo>
                  <Mode aria-label="Уровни">{icons.levels}</Mode>
                  <Mode $on aria-label="Схождение">{icons.meet}</Mode>
                </SyncGrid>
              </Group>

              <Group $w={175}>
                <Legend $color="#98b4d4">Управление</Legend>
                <RunGrid>
                  <Push disabled $edge="#c4c4c4" aria-label="Пауза">{icons.pause}</Push>
                  <Push aria-label="Синус">{icons.sine}</Push>
                  <Push $edge="#f00000" aria-label="Поток">{icons.pair}</Push>
                  <Push aria-label="Автонастройка">{icons.autoKnob}</Push>
                  <Push $span>{icons.start}<StartLabel>Пуск</StartLabel></Push>
                  <Reading>2.53</Reading>
                  <Push aria-label="Автозапуск">{icons.autoRun}</Push>
                </RunGrid>
              </Group>

              <Group $w={68}>
                <Legend $color="#000080">Таймеры</Legend>
                <TimerColumn>
                  <Push $edge="#707070" aria-label="Таймер начала"><Clock arrow="in" /><Down /></Push>
                  <Push $edge="#707070" aria-label="Таймер окончания"><Clock arrow="out" /><Down /></Push>
                </TimerColumn>
              </Group>
            </Groups>
          </Deck>
        </Body>

        <StatusBar>
          <StatusCell $w={189}>USB Осциллограф не подключен</StatusCell>
          <StatusCell />
          <StatusCell $w={48}>1.9</StatusCell>
        </StatusBar>
      </Frame>
    </Page>
  );
}
